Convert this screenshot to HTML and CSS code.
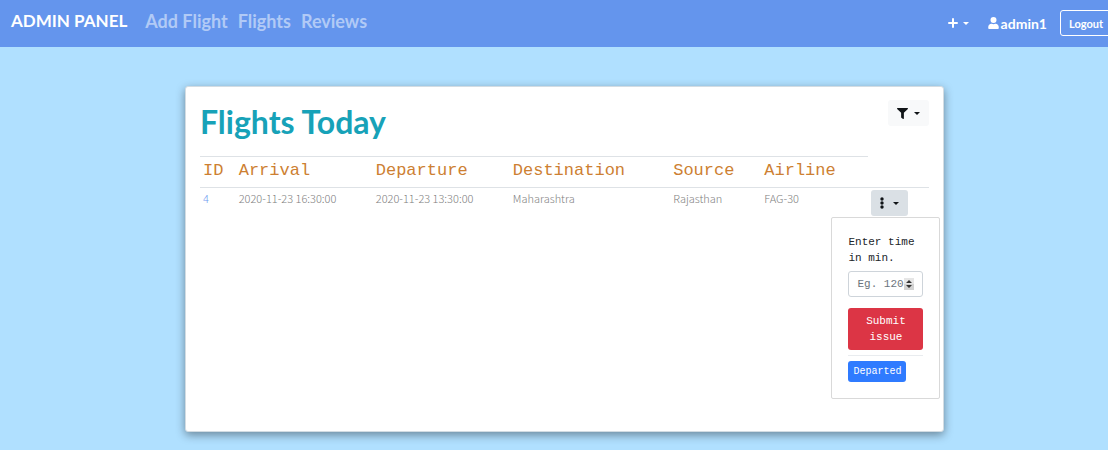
FILE: index.html
```html
<!DOCTYPE html>
<html lang="en">
<head>
<meta charset="utf-8">
<title>Admin Panel</title>
<link rel="stylesheet" href="styles.css">
</head>
<body>
<header class="navbar">
  <a class="brand" href="#">ADMIN PANEL</a>
  <nav class="links">
    <a href="#">Add Flight</a>
    <a href="#">Flights</a>
    <a href="#">Reviews</a>
  </nav>
  <div class="account">
    <button class="add" type="button" aria-label="Add">
      <svg width="10" height="10" viewBox="0 0 10 10"><path d="M5 1v8M1 5h8" stroke="currentColor" stroke-width="2" stroke-linecap="round"/></svg>
      <span class="caret"></span>
    </button>
    <a class="user" href="#"><svg width="11" height="12" viewBox="0 0 448 512"><path fill="currentColor" d="M224 256a128 128 0 1 0 0-256 128 128 0 0 0 0 256zm90 32h-17a174 174 0 0 1-146 0h-17C60 288 0 348 0 422v42c0 27 21 48 48 48h352c27 0 48-21 48-48v-42c0-74-60-134-134-134z"/></svg>admin1</a>
    <button class="logout" type="button">Logout</button>
  </div>
</header>
<main class="page">
  <section class="card">
    <div class="card-head">
      <h1>Flights Today</h1>
      <button class="btn filter" type="button" aria-label="Filter">
        <svg width="11" height="11" viewBox="0 0 512 512"><path fill="currentColor" d="M488 0H24C3 0-8 26 7 41l185 185v206c0 8 4 15 10 20l80 56c16 11 38 0 38-20V226L505 41c15-15 4-41-17-41z"/></svg>
        <span class="caret"></span>
      </button>
    </div>
    <table class="flights">
      <colgroup><col class="c-id"><col class="c-time"><col class="c-time"><col class="c-dest"><col class="c-source"><col class="c-airline"><col></colgroup>
      <thead>
        <tr><th>ID</th><th>Arrival</th><th>Departure</th><th>Destination</th><th>Source</th><th>Airline</th><td></td></tr>
      </thead>
      <tbody>
        <tr>
          <td><a href="#">4</a></td><td>2020-11-23 16:30:00</td><td>2020-11-23 13:30:00</td><td>Maharashtra</td><td>Rajasthan</td><td>FAG-30</td>
          <td class="actions">
            <div class="dropdown">
              <button class="btn more" type="button" aria-label="Flight actions" aria-expanded="true">
                <svg width="4" height="12" viewBox="0 0 4 12" fill="currentColor"><circle cx="2" cy="2" r="1.7"/><circle cx="2" cy="6" r="1.7"/><circle cx="2" cy="10" r="1.7"/></svg>
                <span class="caret"></span>
              </button>
              <form class="menu">
                <label for="delay">Enter time in min.</label>
                <div class="number">
                  <input id="delay" type="number" placeholder="Eg. 120">
                  <svg class="spinner" width="10" height="12" viewBox="0 0 10 12" aria-hidden="true"><path fill="#e6e6e6" d="M0 0h10v12H0z"/><path fill="#d2d2d2" d="M0 6h10v6H0z"/><path fill="#333" d="M2 5l3-3 3 3zM2 7h6l-3 3z"/></svg>
                </div>
                <button class="submit" type="button">Submit issue</button>
                <hr>
                <button class="departed" type="button">Departed</button>
              </form>
            </div>
          </td>
        </tr>
      </tbody>
    </table>
  </section>
</main>
</body>
</html>
```
FILE: styles.css
```css
* { box-sizing: border-box; }

body {
  margin: 0;
  overflow: hidden;
  background: #b0e0ff;
  font-family: Lato, "Open Sans", sans-serif;
}

a { color: inherit; text-decoration: none; }
button { font-family: inherit; margin: 0; }

.caret {
  border: 3px solid transparent;
  border-top-color: currentColor;
  border-bottom: 0;
}

.navbar {
  display: flex;
  align-items: center;
  height: 47px;
  padding: 0 0 6px 11px;
  background: #6495ed;
  color: #fff;
  font-size: 17px;
  font-weight: 700;
}

.links {
  display: flex;
  gap: 10px;
  margin-left: 18px;
  color: #b1caf6;
  font-size: 18px;
}

.account {
  display: flex;
  align-items: center;
  margin: 5px -4px 0 auto;
  font-size: 14px;
}

.add {
  display: flex;
  align-items: center;
  gap: 5px;
  padding: 0;
  border: 0;
  background: none;
  color: #fff;
}

.user {
  display: flex;
  align-items: center;
  gap: 2px;
  margin: 0 13px 0 19px;
}

.logout {
  height: 26px;
  padding: 0 8px;
  border: 1px solid #fff;
  border-radius: 3px;
  background: none;
  color: #fff;
  font-size: 11px;
  font-weight: 700;
}

.page { padding: 39px 164px 18px 185px; }

.card {
  min-height: 346px;
  padding: 13px 14px;
  border: 1px solid #d3dce2;
  border-radius: 3px;
  background: #fff;
  box-shadow: 0 3px 10px rgba(0, 0, 0, 0.4);
}

.card-head {
  display: flex;
  justify-content: space-between;
  align-items: flex-start;
  height: 56px;
}

h1 {
  margin: 3px 0 0;
  color: #17a2b8;
  font-size: 32px;
  line-height: 38px;
}

.btn {
  display: flex;
  align-items: center;
  justify-content: center;
  gap: 6px;
  height: 26px;
  padding: 0 9px;
  border: 0;
  border-radius: 3px;
  color: #101417;
}

.filter { background: #f8f9fa; }

.more {
  width: 100%;
  gap: 9px;
  background: #dae0e5;
}

.flights {
  width: 100%;
  table-layout: fixed;
  border-collapse: collapse;
  color: #808080;
  font-family: "Noto Sans CJK SC", "Noto Sans", sans-serif;
  font-size: 11px;
  font-weight: 300;
}

.c-id { width: 4.9%; }
.c-time { width: 18.8%; }
.c-dest { width: 22%; }
.c-source { width: 12.5%; }
.c-airline { width: 14.7%; }

.flights thead { border-bottom: 1px solid #dee2e6; }

.flights th {
  height: 31px;
  padding: 0 3px 3px;
  border-top: 1px solid #dee2e6;
  color: #cd7f32;
  font-family: "Liberation Mono", monospace;
  font-size: 17px;
  font-weight: 400;
  text-align: left;
}

.flights td {
  padding: 2px 3px;
  line-height: 16px;
  vertical-align: top;
}

.flights td a { color: #6f9cf0; }

.dropdown { position: relative; width: 37px; }

.menu {
  position: absolute;
  top: 27px;
  right: -32px;
  width: 109px;
  padding: 16px;
  border: 1px solid #d9d9d9;
  border-radius: 2px;
  background: #fff;
  color: #212529;
  font: 400 11px/16px "Liberation Mono", monospace;
}

.menu label { display: block; }

.number {
  position: relative;
  margin: 5px 0 11px;
}

.number input {
  display: block;
  width: 100%;
  height: 26px;
  padding: 0 8px;
  border: 1px solid #ced4da;
  border-radius: 3px;
  font: inherit;
  appearance: textfield;
}

.number input::placeholder { color: #6c757d; }

.number input::-webkit-inner-spin-button {
  -webkit-appearance: none;
  margin: 0;
}

.spinner {
  position: absolute;
  top: 7px;
  right: 9px;
}

.submit,
.departed {
  border: 0;
  border-radius: 3px;
  color: #fff;
}

.submit {
  width: 100%;
  padding: 5px 8px;
  background: #dc3545;
  font: inherit;
}

.menu hr {
  margin: 5px 0;
  border: 0;
  border-top: 1px solid #e9ecef;
}

.departed {
  display: block;
  height: 21px;
  padding: 0 5px;
  background: #2f7bff;
  font: 10px/16px "Liberation Mono", monospace;
}
```
